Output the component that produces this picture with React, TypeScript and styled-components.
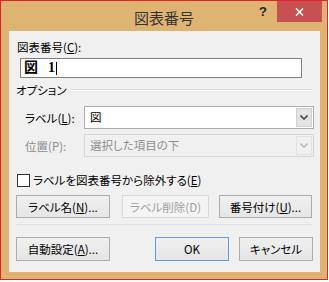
import React from "react";
import styled, { createGlobalStyle } from "styled-components";

const Global = createGlobalStyle`
  html, body { margin: 0; padding: 0; background: #ffffff; }
  body {
    font-family: "Noto Sans CJK JP", "Noto Sans", sans-serif;
    font-size: 11.5px;
    font-feature-settings: "palt";
    color: #000;
  }
  * { box-sizing: border-box; }
`;

const Frame = styled.div`
  width: 328px;
  height: 280px;
  border: 1px solid #e5222a;
  background: #dfb473;
  display: flex;
  flex-direction: column;
  padding: 0 7px 7px 8px;
`;

const TitleBar = styled.div`
  height: 30px;
  margin: 0 -7px 0 -8px;
  padding: 0 5px;
  display: grid;
  grid-template-columns: 1fr auto 1fr;
  align-items: start;
`;

const Title = styled.div`
  grid-column: 2;
  padding-top: 7px;
  font-size: 15px;
  line-height: 20px;
  font-feature-settings: normal;
  color: #333;
`;

const Controls = styled.div`
  grid-column: 3;
  justify-self: end;
  display: flex;
  align-items: flex-start;
`;

const Help = styled.div`
  margin-top: 4px;
  margin-right: 10px;
  font-family: "Liberation Sans", sans-serif;
  font-weight: bold;
  font-size: 13px;
  line-height: 14px;
  color: #222;
`;

const Close = styled.div`
  width: 45px;
  height: 21px;
  background: #c75050;
  display: flex;
  align-items: center;
  justify-content: center;
`;

const Client = styled.div`
  flex: 1;
  background: #f0f0f0;
  padding: 8px 7px 0 7px;
  display: flex;
  flex-direction: column;
`;

const Caption = styled.div<{ $indent?: number }>`
  margin-left: ${(p) => p.$indent ?? 0}px;
  line-height: 16px;
  height: 16px;
  white-space: nowrap;
`;

const Key = styled.span`
  text-decoration: underline;
  text-underline-offset: 1px;
`;

const TextInput = styled.div`
  margin: 3px 0 0 4px;
  width: 282px;
  height: 20px;
  border: 1px solid #7f7f7f;
  background: #fff;
  display: flex;
  align-items: center;
  padding-left: 3px;
  font-family: "Liberation Serif", "Noto Sans CJK JP", serif;
  font-feature-settings: normal;
  font-weight: bold;
  font-size: 14px;
  line-height: 18px;
`;

const Gap = styled.span`
  display: inline-block;
  width: 10px;
`;

const Caret = styled.span`
  display: inline-block;
  width: 1px;
  height: 13px;
  background: #000;
  margin-left: 1px;
`;

const GroupHeader = styled.div`
  margin-top: 4px;
  display: flex;
  align-items: center;
  gap: 4px;
  height: 16px;
  line-height: 16px;
`;

const Rule = styled.div`
  flex: 1;
  height: 2px;
  border-top: 1px solid #dcdcdc;
  border-bottom: 1px solid #ffffff;
`;

const FieldRow = styled.div<{ $top: number }>`
  margin-top: ${(p) => p.$top}px;
  padding-left: 9px;
  display: grid;
  grid-template-columns: 59px 1fr;
  align-items: center;
`;

const FieldLabel = styled.div<{ $disabled?: boolean }>`
  color: ${(p) => (p.$disabled ? "#8d8d8d" : "#000")};
  white-space: nowrap;
`;

const Select = styled.div<{ $disabled?: boolean }>`
  height: 23px;
  margin-right: -1px;
  border: 1px solid ${(p) => (p.$disabled ? "#d5d5d5" : "#acacac")};
  background: ${(p) => (p.$disabled ? "#f0f0f0" : "#fff")};
  display: grid;
  grid-template-columns: 1fr 17px;
  color: ${(p) => (p.$disabled ? "#8d8d8d" : "#000")};
`;

const SelectValue = styled.div`
  padding-left: 5px;
  line-height: 21px;
  white-space: nowrap;
  overflow: hidden;
`;

const ArrowBox = styled.div<{ $disabled?: boolean }>`
  margin: 1px 1px 1px 0;
  background: ${(p) => (p.$disabled ? "#f0f0f0" : "#e3e3e3")};
  border: 1px solid ${(p) => (p.$disabled ? "#e0e0e0" : "#d0d0d0")};
  display: flex;
  align-items: center;
  justify-content: center;
`;

const CheckRow = styled.div`
  margin-top: 15px;
  margin-left: 1px;
  display: flex;
  align-items: center;
  gap: 3px;
  height: 16px;
  line-height: 16px;
`;

const Box = styled.div`
  width: 13px;
  height: 13px;
  border: 1px solid #333;
  background: #fff;
`;

const ButtonRow = styled.div<{ $top: number }>`
  margin-top: ${(p) => p.$top}px;
  display: flex;
  align-items: center;
`;

const Button = styled.div<{
  $w: number;
  $h: number;
  $ml?: number;
  $disabled?: boolean;
  $default?: boolean;
}>`
  width: ${(p) => p.$w}px;
  height: ${(p) => p.$h}px;
  margin-left: ${(p) => p.$ml ?? 0}px;
  border: 1px solid
    ${(p) => (p.$default ? "#5a9ee0" : p.$disabled ? "#d9d9d9" : "#acacac")};
  background: ${(p) =>
    p.$disabled ? "#f4f4f4" : "linear-gradient(#f0f0f0, #e5e5e5)"};
  color: ${(p) => (p.$disabled ? "#a0a0a0" : "#000")};
  display: flex;
  align-items: center;
  justify-content: center;
  white-space: nowrap;
  line-height: 16px;
`;

const Separator = styled.div`
  margin-top: 6px;
  height: 1px;
  background: #e2e2e2;
`;

const Chevron = ({ color }: { color: string }) => (
  <svg width="8" height="5" viewBox="0 0 8 5">
    <path d="M0.5 0.5 L4 4 L7.5 0.5" fill="none" stroke={color} strokeWidth="1.6" />
  </svg>
);

export default function App() {
  return (
    <>
      <Global />
      <Frame>
        <TitleBar>
          <Title>図表番号</Title>
          <Controls>
            <Help>?</Help>
            <Close>
              <svg width="9" height="8" viewBox="0 0 9 8">
                <path d="M1 0.5 L8 7.5 M8 0.5 L1 7.5" stroke="#fff" strokeWidth="1.6" />
              </svg>
            </Close>
          </Controls>
        </TitleBar>
        <Client>
          <Caption $indent={1}>
            図表番号(<Key>C</Key>):
          </Caption>
          <TextInput>
            図<Gap />1<Caret />
          </TextInput>
          <GroupHeader>
            <span>オプション</span>
            <Rule />
          </GroupHeader>
          <FieldRow $top={8}>
            <FieldLabel>
              ラベル(<Key>L</Key>):
            </FieldLabel>
            <Select>
              <SelectValue>図</SelectValue>
              <ArrowBox>
                <Chevron color="#4a4a4a" />
              </ArrowBox>
            </Select>
          </FieldRow>
          <FieldRow $top={5}>
            <FieldLabel $disabled>位置(P):</FieldLabel>
            <Select $disabled>
              <SelectValue>選択した項目の下</SelectValue>
              <ArrowBox $disabled>
                <Chevron color="#bcbcbc" />
              </ArrowBox>
            </Select>
          </FieldRow>
          <CheckRow>
            <Box />
            <span>
              ラベルを図表番号から除外する(<Key>E</Key>)
            </span>
          </CheckRow>
          <ButtonRow $top={7}>
            <Button $w={94} $h={23}>
              ラベル名(<Key>N</Key>)...
            </Button>
            <Button $w={87} $h={23} $ml={12} $disabled>
              ラベル削除(D)
            </Button>
            <Button $w={93} $h={23} $ml={10}>
              番号付け(<Key>U</Key>)...
            </Button>
          </ButtonRow>
          <Separator />
          <ButtonRow $top={12}>
            <Button $w={94} $h={24}>
              自動設定(<Key>A</Key>)...
            </Button>
            <Button $w={74} $h={24} $ml={45} $default>
              OK
            </Button>
            <Button $w={74} $h={24} $ml={10}>
              キャンセル
            </Button>
          </ButtonRow>
        </Client>
      </Frame>
    </>
  );
}
